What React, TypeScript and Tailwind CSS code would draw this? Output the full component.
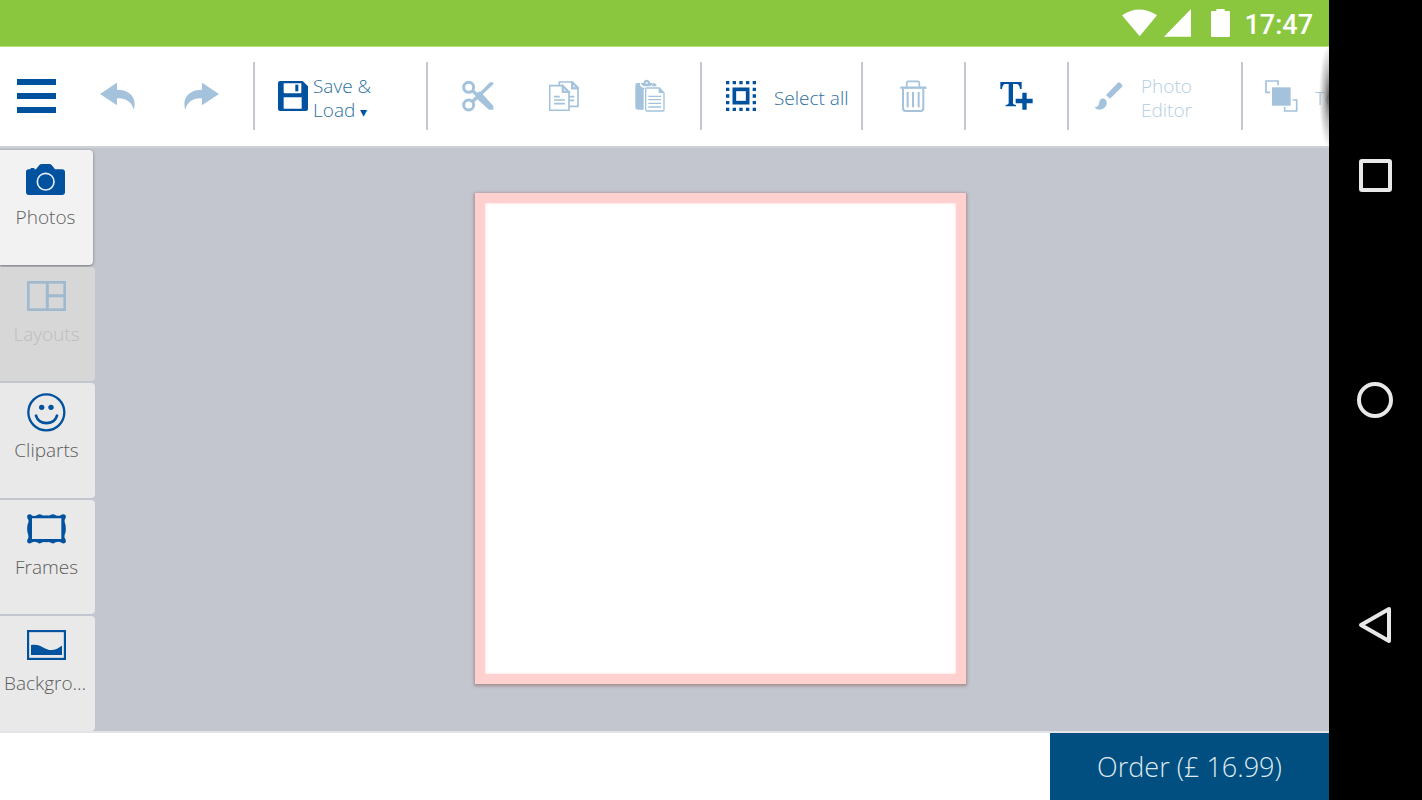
import { type ReactNode } from 'react'

const UndoIcon = ({ className = '' }: { className?: string }) => (
  <svg className={className} width="35" height="27" viewBox="300 127 105 81" fill="currentColor">
    <path d="M300 160L351 126V147C386 147 404 166 404 190L402 208C394 184 380 172 351 173V194Z" />
  </svg>
)

const SaveIcon = () => (
  <svg width="30" height="30" viewBox="0 0 90 90" fill="currentColor" fillRule="evenodd">
    <path d="M6 0H74L90 16V84Q90 90 84 90H6Q0 90 0 84V6Q0 0 6 0ZM17 7V34Q17 37 20 37H67Q70 37 70 34V7ZM17 49V83H71V49Z" />
    <path d="M52 11H61V31H52Z" />
  </svg>
)

const CutIcon = () => (
  <svg width="32" height="32" viewBox="0 0 96 96" fill="none" stroke="currentColor">
    <circle cx="20" cy="22" r="15" strokeWidth="9" />
    <circle cx="20" cy="75" r="15" strokeWidth="9" />
    <path d="M30 31L48 48M30 66L46 51" strokeWidth="10" />
    <path d="M42 40L54 34L94 78V89H81L42 54Z" fill="currentColor" stroke="none" />
    <path d="M53 38L84 7H94V13L60 45Z" fill="currentColor" stroke="none" />
  </svg>
)

const CopyIcon = () => (
  <svg width="30" height="30" viewBox="0 0 90 90" fill="none" stroke="currentColor" strokeWidth="5">
    <path d="M31 12V3H70L87 20V76H62M69 3V22H87" />
    <path d="M2 14H41L60 33V88H2ZM41 14V33H60" />
    <path d="M15 47H32M15 57H48M15 68H48M60 47H76M60 58H76" />
    <path d="M41 14L60 33H41ZM69 3L87 22H69Z" fill="currentColor" fillOpacity="0.4" />
  </svg>
)

const PasteIcon = () => (
  <svg width="31" height="34" viewBox="0 0 93 102" fill="currentColor">
    <path d="M18 15V12H25Q27 2 35 2T46 12H52V17L44 22H26ZM32 10V14H38V10Z" fillRule="evenodd" />
    <path d="M8 12H15V20L24 26H32Q26 28 26 34V92H8Q1 92 1 85V19Q1 12 8 12Z" />
    <path d="M54 12Q64 12 65 22H50Z" />
    <path d="M36 27H73L87 42V92Q87 96 83 96H36Q32 96 32 92V31Q32 27 36 27Z" fill="#fff" stroke="currentColor" strokeWidth="4" />
    <path d="M71 26V42H88Z" />
    <path d="M40 52H78M40 62H78M40 73H78M40 84H78" stroke="currentColor" strokeWidth="4" />
  </svg>
)

const SelectAllIcon = () => (
  <svg width="32" height="32" viewBox="0 0 96 96" fill="none" stroke="currentColor">
    <rect x="28" y="28" width="40" height="40" strokeWidth="11" />
    <path
      d="M3 8H93M3 88H93M8 23V33M8 43V53M8 63V73M88 23V33M88 43V53M88 63V73"
      strokeWidth="10"
      strokeDasharray="10 10"
    />
  </svg>
)

const TrashIcon = () => (
  <svg width="27" height="32" viewBox="0 0 81 96" fill="none" stroke="currentColor" strokeWidth="5">
    <path d="M20 20V9Q20 4 25 4H53Q58 4 58 9V20" />
    <path d="M1 23H79" strokeWidth="7" />
    <path d="M9 26V85Q9 93 17 93H62Q70 93 70 85V26" strokeWidth="6" />
    <path d="M23 36V82M39 36V82M56 36V82" strokeWidth="6" />
  </svg>
)

const AddTextIcon = () => (
  <svg width="33" height="28" viewBox="0 0 99 84" fill="currentColor">
    <path d="M1 0H65V21H60Q58 6 50 6H39V62Q39 68 48 69V73H17V69Q26 68 26 62V6H16Q8 6 6 21H1Z" />
    <path d="M67 32H80V50H98V64H80V83H67V64H47V50H67Z" />
  </svg>
)

const BrushIcon = () => (
  <svg width="29" height="28" viewBox="0 0 87 84" fill="currentColor">
    <path d="M71 3Q75-1 79 3L84 8Q87 12 83 16L48 50L36 39Z" />
    <path d="M16 60C17 48 30 46 36 55C43 68 32 83 17 83Q6 83 1 76Q15 76 16 60Z" />
  </svg>
)

const ToFrontIcon = () => (
  <svg width="33" height="32" viewBox="0 0 99 96" fill="none" stroke="currentColor" strokeWidth="5">
    <path d="M15 37H3V3H39V16" />
    <path d="M83 60H95V93H59V81" />
    <rect x="21" y="22" width="56" height="55" fill="currentColor" stroke="none" />
  </svg>
)

const PhotosIcon = () => (
  <svg width="39" height="31" viewBox="0 0 117 93" fill="currentColor">
    <path d="M8 16H14V12H25V16H30L40 3Q43 0 47 0H70Q74 0 77 3L87 16H108Q117 16 117 25V84Q117 93 108 93H9Q0 93 0 84V24Q0 16 8 16Z" />
    <circle cx="59" cy="53" r="25" fill="none" stroke="#e8eef5" strokeWidth="5" />
  </svg>
)

const LayoutsIcon = () => (
  <svg width="39" height="30" viewBox="0 0 117 90" fill="none" stroke="currentColor">
    <rect x="4" y="4" width="109" height="82" strokeWidth="8" />
    <path d="M61 3V86M61 44H114" strokeWidth="9" />
  </svg>
)

const ClipartsIcon = () => (
  <svg width="39" height="39" viewBox="0 0 117 117" fill="none" stroke="currentColor" strokeWidth="7">
    <circle cx="58" cy="58" r="54" />
    <path d="M27 68C35 98 82 98 90 68" strokeWidth="8" strokeLinecap="round" />
    <circle cx="44" cy="43" r="8" fill="currentColor" stroke="none" />
    <circle cx="72" cy="43" r="8" fill="currentColor" stroke="none" />
  </svg>
)

const FramesIcon = () => (
  <svg width="39" height="30" viewBox="0 0 117 90" fill="currentColor" fillRule="evenodd">
    <path d="M2 3Q8-2 16 5Q22 7 30 4Q37-1 43 2Q50 6 58 4Q64 6 72 2Q79-2 86 4Q94 7 101 4Q109-2 115 3Q119 9 113 17Q112 24 115 31Q118 44 115 57Q111 65 113 72Q119 80 115 86Q108 91 101 85Q94 82 86 85Q79 91 72 86Q65 82 58 85Q50 82 43 86Q37 91 30 85Q22 82 16 85Q8 91 2 86Q-2 80 4 72Q5 65 2 57Q-1 44 2 31Q6 24 4 17Q-2 9 2 3ZM15 13V75H103V13Z" />
  </svg>
)

const BackgroundIcon = () => (
  <svg width="39" height="30" viewBox="0 0 117 90" fill="currentColor">
    <rect x="3" y="3" width="111" height="84" fill="none" stroke="currentColor" strokeWidth="7" />
    <path d="M12 45C42 39 52 61 75 60C92 59 99 49 105 47V75H12Z" />
  </svg>
)

function Group({ className, children }: { className: string; children: ReactNode }) {
  return <div className={`flex h-[68px] shrink-0 items-center border-[#c3c7ce] ${className}`}>{children}</div>
}

function IconButton({ label, width, children }: { label: string; width: string; children: ReactNode }) {
  return (
    <button type="button" aria-label={label} className={`flex h-full items-center justify-center ${width}`}>
      {children}
    </button>
  )
}

const tools = [
  { label: 'Photos', icon: <PhotosIcon />, look: 'mr-[2px] bg-[#f2f2f2] text-[#5c5c5c] shadow-[0_1px_3px_#777]', tint: 'text-[#00519e]' },
  { label: 'Layouts', icon: <LayoutsIcon />, look: 'bg-[#d7d7d7] text-[#bcbebf]', tint: 'text-[#9fb9cf]', disabled: true },
  { label: 'Cliparts', icon: <ClipartsIcon />, look: 'bg-[#e9e9e9] text-[#5c5c5c]', tint: 'text-[#00519e]' },
  { label: 'Frames', icon: <FramesIcon />, look: 'bg-[#e9e9e9] text-[#5c5c5c]', tint: 'text-[#00519e]' },
  { label: 'Background', icon: <BackgroundIcon />, look: 'bg-[#e9e9e9] text-[#5c5c5c]', tint: 'text-[#00519e]' },
]

function StatusBar() {
  return (
    <div className="flex h-[47px] shrink-0 items-center justify-end border-b border-[#b5e07e] bg-[#8ac73e] pr-4 text-white">
      <svg className="mr-[7px]" width="35" height="28" viewBox="0 0 105 84" fill="currentColor">
        <path d="M0 19Q52-16 105 19L53 82Z" />
      </svg>
      <svg className="mr-5" width="27" height="28" viewBox="0 0 81 84" fill="currentColor">
        <path d="M81 0V83H0Z" />
      </svg>
      <svg className="mr-[14px]" width="19" height="28" viewBox="0 0 57 84" fill="currentColor">
        <path d="M16 0H41V6H53Q57 6 57 10V80Q57 84 53 84H4Q0 84 0 80V10Q0 6 4 6H16Z" />
      </svg>
      <time className="pt-[3px] font-[Roboto,sans-serif] text-[27px] leading-8 font-medium">17:47</time>
    </div>
  )
}

function Toolbar() {
  return (
    <header className="relative flex h-[101px] shrink-0 items-center overflow-hidden border-b-2 border-[#cdd0d5] bg-white pb-px text-[#a4c2dc]">
      <Group className="w-[255px] border-r-2 pl-[17px]">
        <button type="button" aria-label="Menu" className="mr-[19px] flex flex-col gap-2 text-[#00519e]">
          <span className="h-[6px] w-[39px] bg-current" />
          <span className="h-[6px] w-[39px] bg-current" />
          <span className="h-[6px] w-[39px] bg-current" />
        </button>
        <IconButton label="Undo" width="w-[84px]">
          <UndoIcon />
        </IconButton>
        <IconButton label="Redo" width="w-[84px]">
          <UndoIcon className="-scale-x-100" />
        </IconButton>
      </Group>
      <Group className="w-[173px] border-r-2 pl-[23px]">
        <button type="button" className="flex items-center gap-[5px] text-left text-[#00519e]">
          <SaveIcon />
          <span className="pt-[3px] text-[19px] leading-6 text-[#2c6f9f]">
            Save &amp;
            <br />
            Load <span className="text-sm leading-4 text-[#00519e]">▾</span>
          </span>
        </button>
      </Group>
      <Group className="w-[274px] border-r-2 pl-[7px]">
        <IconButton label="Cut" width="w-[86px]">
          <CutIcon />
        </IconButton>
        <IconButton label="Copy" width="w-[86px]">
          <CopyIcon />
        </IconButton>
        <IconButton label="Paste" width="w-[86px]">
          <PasteIcon />
        </IconButton>
      </Group>
      <Group className="w-[161px] border-r-2 pl-[23px]">
        <button type="button" className="flex items-center gap-[17px] whitespace-nowrap text-[#00519e]">
          <SelectAllIcon />
          <span className="pt-[3px] text-[19px] leading-6 text-[#2c6f9f]">Select all</span>
        </button>
      </Group>
      <Group className="w-[103px] border-r-2">
        <IconButton label="Delete" width="w-full">
          <TrashIcon />
        </IconButton>
      </Group>
      <Group className="w-[103px] border-r-2 text-[#00519e]">
        <IconButton label="Add text" width="w-full">
          <AddTextIcon />
        </IconButton>
      </Group>
      <Group className="w-[174px] border-r-2 pl-[25px]">
        <button type="button" disabled className="flex items-center gap-[18px] text-left">
          <BrushIcon />
          <span className="pt-[3px] text-[19px] leading-6 text-[#b4cee2]">
            Photo
            <br />
            Editor
          </span>
        </button>
      </Group>
      <Group className="pl-[22px]">
        <button type="button" disabled className="flex items-center gap-[17px] whitespace-nowrap">
          <ToFrontIcon />
          <span className="pt-[3px] text-[19px] leading-6 text-[#a4c2dc]">To front</span>
        </button>
      </Group>
      {/* scroll hint on the clipped edge */}
      <div className="absolute inset-y-0 right-0 w-3 bg-[radial-gradient(10px_52px_at_100%_50%,#444c,#8888_50%,transparent)]" />
    </header>
  )
}

function Sidebar() {
  return (
    <aside className="flex w-[95px] shrink-0 flex-col gap-[2px] pt-[2px]">
      {tools.map((tool) => (
        <button
          key={tool.label}
          type="button"
          disabled={tool.disabled}
          className={`flex min-h-0 flex-1 flex-col items-center rounded-r pt-[9px] pr-[6px] pl-1 text-[19px] leading-6 ${tool.look}`}
        >
          <span className={`flex h-10 items-center ${tool.tint}`}>{tool.icon}</span>
          <span className="mt-[6px] max-w-full truncate">{tool.label}</span>
        </button>
      ))}
    </aside>
  )
}

function SystemNav() {
  return (
    <nav aria-label="System" className="flex w-[93px] shrink-0 flex-col items-center justify-around bg-black py-[62px] pr-[2px] text-[#e8e8e8]">
      <button type="button" aria-label="Recent apps">
        <svg width="38" height="38" viewBox="0 0 38 38" fill="none" stroke="currentColor" strokeWidth="4">
          <rect x="5" y="5" width="29" height="29" rx="1" />
        </svg>
      </button>
      <button type="button" aria-label="Home">
        <svg width="38" height="38" viewBox="0 0 38 38" fill="none" stroke="currentColor" strokeWidth="4">
          <circle cx="19" cy="19" r="16" />
        </svg>
      </button>
      <button type="button" aria-label="Back">
        <svg width="38" height="38" viewBox="0 0 38 38" fill="none" stroke="currentColor" strokeWidth="4" strokeLinejoin="round">
          <path d="M33 3V35L5 19Z" />
        </svg>
      </button>
    </nav>
  )
}

export default function App() {
  return (
    <div className="flex h-screen font-['Open_Sans',sans-serif] font-light">
      <div className="flex min-w-0 flex-1 flex-col">
        <StatusBar />
        <Toolbar />
        <div className="flex min-h-0 flex-1 bg-[#c3c6cf]">
          <Sidebar />
          <main className="flex min-w-0 flex-1 items-center justify-center pt-[45px] pb-[47px] pl-[17px]">
            <div className="aspect-square h-full border-[10px] border-[#ffd0d0] bg-white shadow-[0_1px_3px_1px_#a08c8c,inset_0_0_3px_#ffd0d0]" />
          </main>
        </div>
        <footer className="flex h-[69px] shrink-0 justify-end border-t-2 border-[#e3e4e7] bg-white">
          <button type="button" className="w-[279px] bg-[#004f80] text-[27px] leading-8 text-[#dfe9f0]">
            Order (£ 16.99)
          </button>
        </footer>
      </div>
      <SystemNav />
    </div>
  )
}
